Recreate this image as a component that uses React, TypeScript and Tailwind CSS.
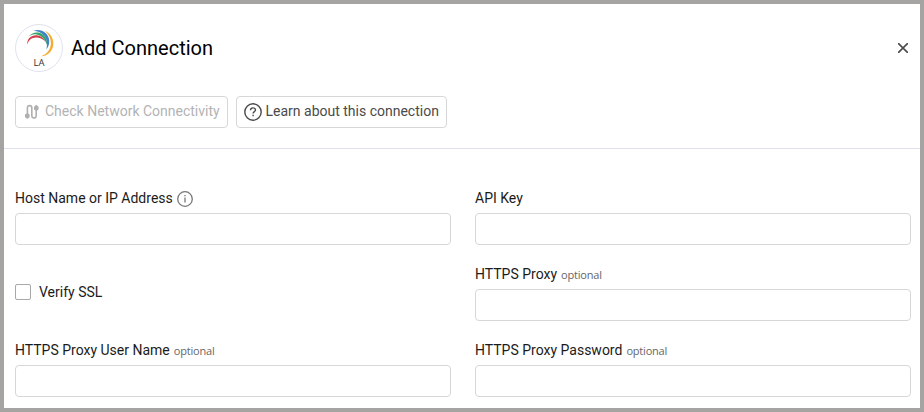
import React from "react";

function Logo() {
  return (
    <svg width="48" height="48" viewBox="0 0 48 48" className="shrink-0">
      <circle cx="24" cy="24" r="23.500" fill="#fff" stroke="#dfe1ee" />
      <path d="M12.300 20.800C11.800 14.500 16.500 11 21.500 11.300C25.500 11.600 28.500 13.800 30.300 17.500C27.500 14.700 24.500 13.400 21 13.500C17 13.700 13.500 15.800 12.300 20.800Z" fill="#d33c4b" />
      <path d="M12.800 13.200C15.500 9.700 19 8.200 22.500 8.400C28.500 8.800 32.600 14 32.300 21.500C30.300 15.500 26.500 11.200 21.500 10.400C18 10 15 11.300 12.800 13.200Z" fill="#35a567" />
      <path d="M18.500 6.800C21 5.800 24 5.500 27 6.800C32.500 9.300 35.200 14.500 34 20C33.500 22.300 32.600 24 31.300 25.500C32.600 20.500 32.200 15.500 29 11.500C26.300 8.400 22.500 7 18.500 6.800Z" fill="#4083c5" />
      <path d="M29.500 6.800C35.500 9.300 38.800 14.500 38.300 20.500C37.700 27 33 31.800 26.200 32.300C32 30 35.300 26 35.800 20.300C36.200 14.800 33.800 10.300 29.500 6.800Z" fill="#f5aa32" />
      <text x="24" y="42" textAnchor="middle" fontSize="9.500" fill="#333" className="font-['Open_Sans',sans-serif]">LA</text>
    </svg>
  );
}

function RouteIcon() {
  return (
    <svg width="14" height="16" viewBox="0 0 14 16" fill="none" stroke="#b0b0b0" strokeWidth="1.600">
      <path d="M2.400 11V3.800a2.200 2.200 0 0 1 4.400 0v8a2.200 2.200 0 0 0 4.400 0V5" />
      <path d="M2.400 14.800v-2M11.300 3V1" />
      <rect x="0" y="9.500" width="4.600" height="4.600" rx="1.600" fill="#b0b0b0" stroke="none" />
      <rect x="9" y="1.800" width="4.600" height="4.600" rx="1.600" fill="#b0b0b0" stroke="none" />
    </svg>
  );
}

function HelpIcon() {
  return (
    <svg width="18" height="18" viewBox="0 0 18 18" fill="none" stroke="#4a4a4a" strokeWidth="1.400">
      <circle cx="9" cy="9" r="8.200" />
      <path d="M6.500 7.200C6.500 5.600 7.600 4.900 9 4.900s2.500.8 2.500 2.100C11.500 8.600 9.100 8.600 9.100 10.500" />
      <path d="M9.100 11.800v1.500" />
    </svg>
  );
}

function InfoIcon() {
  return (
    <svg width="16" height="16" viewBox="0 0 16 16" fill="none" stroke="#777" strokeWidth="1.300">
      <circle cx="8" cy="8" r="7.300" />
      <path d="M8 6.600v5M8 4v1.300" />
    </svg>
  );
}

type FieldProps = { label: string; optional?: boolean; info?: boolean };

function Field({ label, optional, info }: FieldProps) {
  return (
    <label className="block h-[76px]">
      <span className="flex h-[28px] items-start pt-[3px]">
        <span className="flex h-5 items-center whitespace-nowrap text-[14px] leading-5 text-[#1b1b1b]">
          {label}
          {optional && <span className="ml-1 pt-px font-['Open_Sans',sans-serif] text-[11px] tracking-[-0.200px] text-[#666]">optional</span>}
          {info && <span className="ml-1 pt-px"><InfoIcon /></span>}
        </span>
      </span>
      <input className="block h-8 w-full rounded-[4px] border border-[#d5d7d8] bg-white px-2 outline-none" />
    </label>
  );
}

export default function App() {
  return (
    <div className="h-[412px] w-[924px] overflow-hidden border-4 border-[#a5a4a3] bg-white font-[Roboto,sans-serif]">
      <header className="flex h-[145px] flex-col border-b border-[#e0e1ee] px-[11px] pt-5">
        <div className="flex h-12 items-center">
          <Logo />
          <h1 className="ml-2 text-[20px] leading-6 text-black">Add Connection</h1>
          <button aria-label="Close" className="ml-auto mr-px">
            <svg width="10" height="10" viewBox="0 0 10 10" stroke="#4a4a4a" strokeWidth="1.600">
              <path d="M0 0l10 10M10 0L0 10" />
            </svg>
          </button>
        </div>
        <div className="mt-6 flex gap-2 text-[14px] leading-5">
          <button className="flex h-8 w-[213px] items-center whitespace-nowrap rounded-[4px] border border-[#d5d7d8] pl-[9px] text-[#b3b3b3]">
            <RouteIcon />
            <span className="ml-[6px] pb-[2px]">Check Network Connectivity</span>
          </button>
          <button className="flex h-8 w-[211px] items-center whitespace-nowrap rounded-[4px] border border-[#d5d7d8] pl-[7px] text-[#4a4a4a]">
            <HelpIcon />
            <span className="ml-[3.500px] pb-[2px]">Learn about this connection</span>
          </button>
        </div>
      </header>
      <main className="grid grid-cols-2 gap-x-6 pl-[11px] pr-[9px] pt-9">
        <Field label="Host Name or IP Address" info />
        <Field label="API Key" />
        <label className="flex h-[76px] items-start pt-[22px]">
          <input type="checkbox" className="mt-[1px] h-4 w-4 appearance-none rounded-[2px] border border-[#a8a8a8]" />
          <span className="ml-2 text-[14px] leading-[18px] text-[#1b1b1b]">Verify SSL</span>
        </label>
        <Field label="HTTPS Proxy" optional />
        <Field label="HTTPS Proxy User Name" optional />
        <Field label="HTTPS Proxy Password" optional />
      </main>
    </div>
  );
}
